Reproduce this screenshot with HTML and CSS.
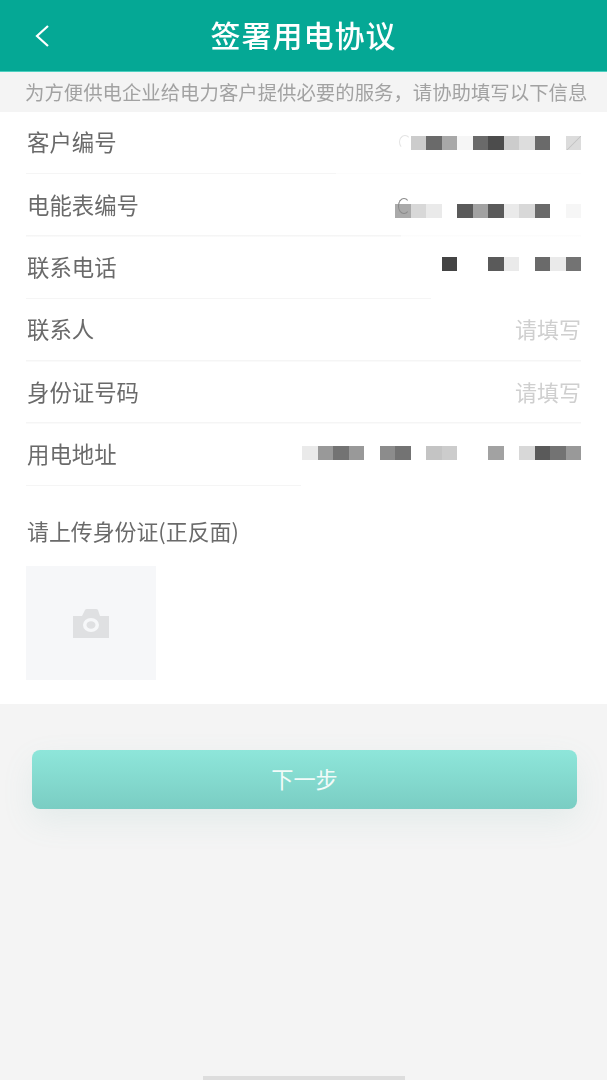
FILE: index.html
```html
<!DOCTYPE html>
<html lang="zh-CN">
<head>
    <meta charset="UTF-8">
    <meta name="viewport" content="width=device-width, initial-scale=1.0">
    <title>签署用电协议</title>
    <link rel="stylesheet" href="styles.css">
</head>
<body>
    <header class="top-bar">
        <svg class="back-icon" viewBox="0 0 16 24" width="16" height="24">
            <path d="M14 2 L3 12 L14 22" fill="none" stroke="#fff" stroke-width="2.2"/>
        </svg>
        <h1>签署用电协议</h1>
    </header>

    <p class="notice">为方便供电企业给电力客户提供必要的服务，请协助填写以下信息</p>

    <section class="form">
        <div class="row line-short-1">
            <span class="label">客户编号</span>
            <div class="mosaic">
                <i class="m-arc"></i><i class="m-c3"></i><i class="m-6"></i><i class="m-3"></i><i class="m-f"></i><i class="m-6"></i><i class="m-4b"></i><i class="m-c3"></i><i class="m-8"></i><i class="m-6"></i><i class="m-0"></i><i class="m-slash"></i>
            </div>
        </div>
        <div class="row line-short-2">
            <span class="label">电能表编号</span>
            <div class="mosaic mosaic-low">
                <i class="m-c m-arc-dark"></i><i class="m-d"></i><i class="m-e"></i><i class="m-0"></i><i class="m-5"></i><i class="m-a"></i><i class="m-5"></i><i class="m-e"></i><i class="m-d"></i><i class="m-6"></i><i class="m-0"></i><i class="m-f"></i>
            </div>
        </div>
        <div class="row line-short-3">
            <span class="label">联系电话</span>
            <div class="mosaic mosaic-high">
                <i class="m-4"></i><i class="m-0"></i><i class="m-0"></i><i class="m-5"></i><i class="m-e"></i><i class="m-0"></i><i class="m-6"></i><i class="m-e"></i><i class="m-7"></i>
            </div>
        </div>
        <div class="row">
            <span class="label">联系人</span>
            <span class="hint">请填写</span>
        </div>
        <div class="row">
            <span class="label">身份证号码</span>
            <span class="hint">请填写</span>
        </div>
        <div class="row line-short-4">
            <span class="label">用电地址</span>
            <div class="mosaic mosaic-up">
                <i class="m-e"></i><i class="m-9"></i><i class="m-7"></i><i class="m-9"></i><i class="m-0"></i><i class="m-8x"></i><i class="m-7"></i><i class="m-0"></i><i class="m-c2"></i><i class="m-c3"></i><i class="m-0"></i><i class="m-0"></i><i class="m-a"></i><i class="m-0"></i><i class="m-d"></i><i class="m-5"></i><i class="m-7"></i><i class="m-9"></i>
            </div>
        </div>

        <div class="upload">
            <div class="upload-title">请上传身份证(正反面)</div>
            <div class="upload-box">
                <svg viewBox="0 0 36 29" width="36" height="29">
                    <path d="M0 7 H9 L12 1 Q12.5 0 14 0 H23 Q24.5 0 25 1 L27 7 H36 V29 H0 Z" fill="#dfe0e2"/>
                    <ellipse cx="18" cy="16" rx="8" ry="7" fill="#f6f7f9"/>
                    <ellipse cx="18" cy="16" rx="4.5" ry="3.8" fill="#dfe0e2"/>
                </svg>
            </div>
        </div>
    </section>

    <div class="actions">
        <button class="next-btn">下一步</button>
    </div>

    <div class="home-bar"></div>
</body>
</html>
```

FILE: styles.css
```css
* {
    margin: 0;
    padding: 0;
    box-sizing: border-box;
}

html, body {
    height: 100%;
}

body {
    display: flex;
    flex-direction: column;
    min-height: 1080px;
    overflow: hidden;
    font-family: "Noto Sans CJK SC", "Liberation Sans", sans-serif;
    background-color: #f4f4f4;
    color: #666;
}

.top-bar {
    position: relative;
    height: 72px;
    display: flex;
    justify-content: center;
    align-items: center;
    background-color: #05a895;
    border-bottom: 1px solid #4cd0c0;
    color: #fff;
}

.top-bar h1 {
    padding-bottom: 4px;
    font-size: 30px;
    font-weight: 500;
    letter-spacing: 1px;
    filter: blur(0.4px);
}

.back-icon {
    position: absolute;
    left: 34px;
    top: 24px;
    filter: blur(0.3px);
}

.notice {
    height: 40px;
    line-height: 40px;
    padding-left: 25px;
    font-size: 19.4px;
    white-space: nowrap;
    color: #a2a2a2;
    filter: blur(0.4px);
}

.form {
    height: 592px;
    background-color: #fff;
}

.row {
    height: 62.4px;
    margin: 0 26px;
    display: flex;
    justify-content: space-between;
    align-items: center;
    background: linear-gradient(#f5f5f5, #f5f5f5) left bottom / 100% 1.5px no-repeat;
}

.line-short-1 {
    background: linear-gradient(#f5f5f5, #f5f5f5) left bottom / 310px 1.5px no-repeat,
        linear-gradient(#fcfcfc, #fcfcfc) left bottom / 100% 1.5px no-repeat;
}

.line-short-2 {
    background: linear-gradient(#f5f5f5, #f5f5f5) left bottom / 375px 1.5px no-repeat,
        linear-gradient(#fcfcfc, #fcfcfc) left bottom / 100% 1.5px no-repeat;
}

.line-short-3 {
    background: linear-gradient(#f5f5f5, #f5f5f5) left bottom / 405px 1.5px no-repeat;
}

.line-short-4 {
    background: linear-gradient(#f5f5f5, #f5f5f5) left bottom / 275px 1.5px no-repeat;
}

.label {
    padding: 0 0 4px 1px;
    font-size: 22.4px;
    color: #6a6a6a;
    filter: blur(0.4px);
}

.hint {
    padding-bottom: 4px;
    font-size: 22px;
    color: #cfcfcf;
    filter: blur(0.4px);
}

.mosaic {
    display: flex;
    filter: blur(0.4px);
}

.mosaic-low {
    margin-top: 10px;
}

.mosaic-high {
    margin-top: -8px;
}

.mosaic-up {
    margin-top: -4px;
}

.mosaic i {
    position: relative;
    display: block;
    width: 15.5px;
    height: 14px;
}

.m-0 { background-color: transparent; }
.m-f { background-color: #f6f6f6; }
.m-e { background-color: #eaeaea; }
.m-d { background-color: #d8d8d8; }
.m-c { background-color: #aaa; }
.m-c2 { background-color: #c4c4c4; }
.m-c3 { background-color: #ccc; }
.m-a { background-color: #a2a2a2; }
.m-9 { background-color: #999; }
.m-8 { background-color: #ddd; }
.m-8x { background-color: #8c8c8c; }
.m-7 { background-color: #737373; }
.m-6 { background-color: #6a6a6a; }
.m-5 { background-color: #5a5a5a; }
.m-4b { background-color: #4c4c4c; }
.m-4 { background-color: #444; }
.m-3 { background-color: #a8a8a8; }
.m-slash { background: linear-gradient(135deg, #dcdcdc 48%, #bdbdbd 50%, #dcdcdc 56%); }

/* leftover bits of the first digit sticking out of the blur */
.m-arc::before,
.m-arc-dark::before {
    content: "";
    position: absolute;
    left: 4px;
    top: -1px;
    width: 10px;
    height: 12px;
    border: 1.5px solid #e4e4e4;
    border-right-color: transparent;
    border-bottom-color: transparent;
    border-radius: 50%;
}

.m-arc-dark::before {
    left: 3px;
    top: -6px;
    height: 14px;
    border-color: #8a8a8a;
    border-right-color: transparent;
}

.upload {
    padding: 30px 26px 0;
}

.upload-title {
    padding-left: 1px;
    font-size: 21.9px;
    line-height: 30px;
    color: #6a6a6a;
    filter: blur(0.4px);
}

.upload-box {
    width: 130px;
    height: 114px;
    margin-top: 20px;
    display: flex;
    justify-content: center;
    align-items: center;
    background-color: #f6f7f9;
}

.upload-box svg {
    filter: blur(0.4px);
}

.actions {
    padding: 46px 30px 0 32px;
}

.next-btn {
    display: block;
    width: 545px;
    height: 59px;
    padding-bottom: 4px;
    border: none;
    border-radius: 8px;
    font-family: inherit;
    font-size: 22.2px;
    color: #f2fbf9;
    background: linear-gradient(#8ee6da, #7acdc3);
    box-shadow: 0 12px 32px rgba(100, 170, 160, 0.11);
}

.home-bar {
    width: 202px;
    height: 4px;
    margin: auto 0 0 203px;
    background-color: #ddd;
}
```
